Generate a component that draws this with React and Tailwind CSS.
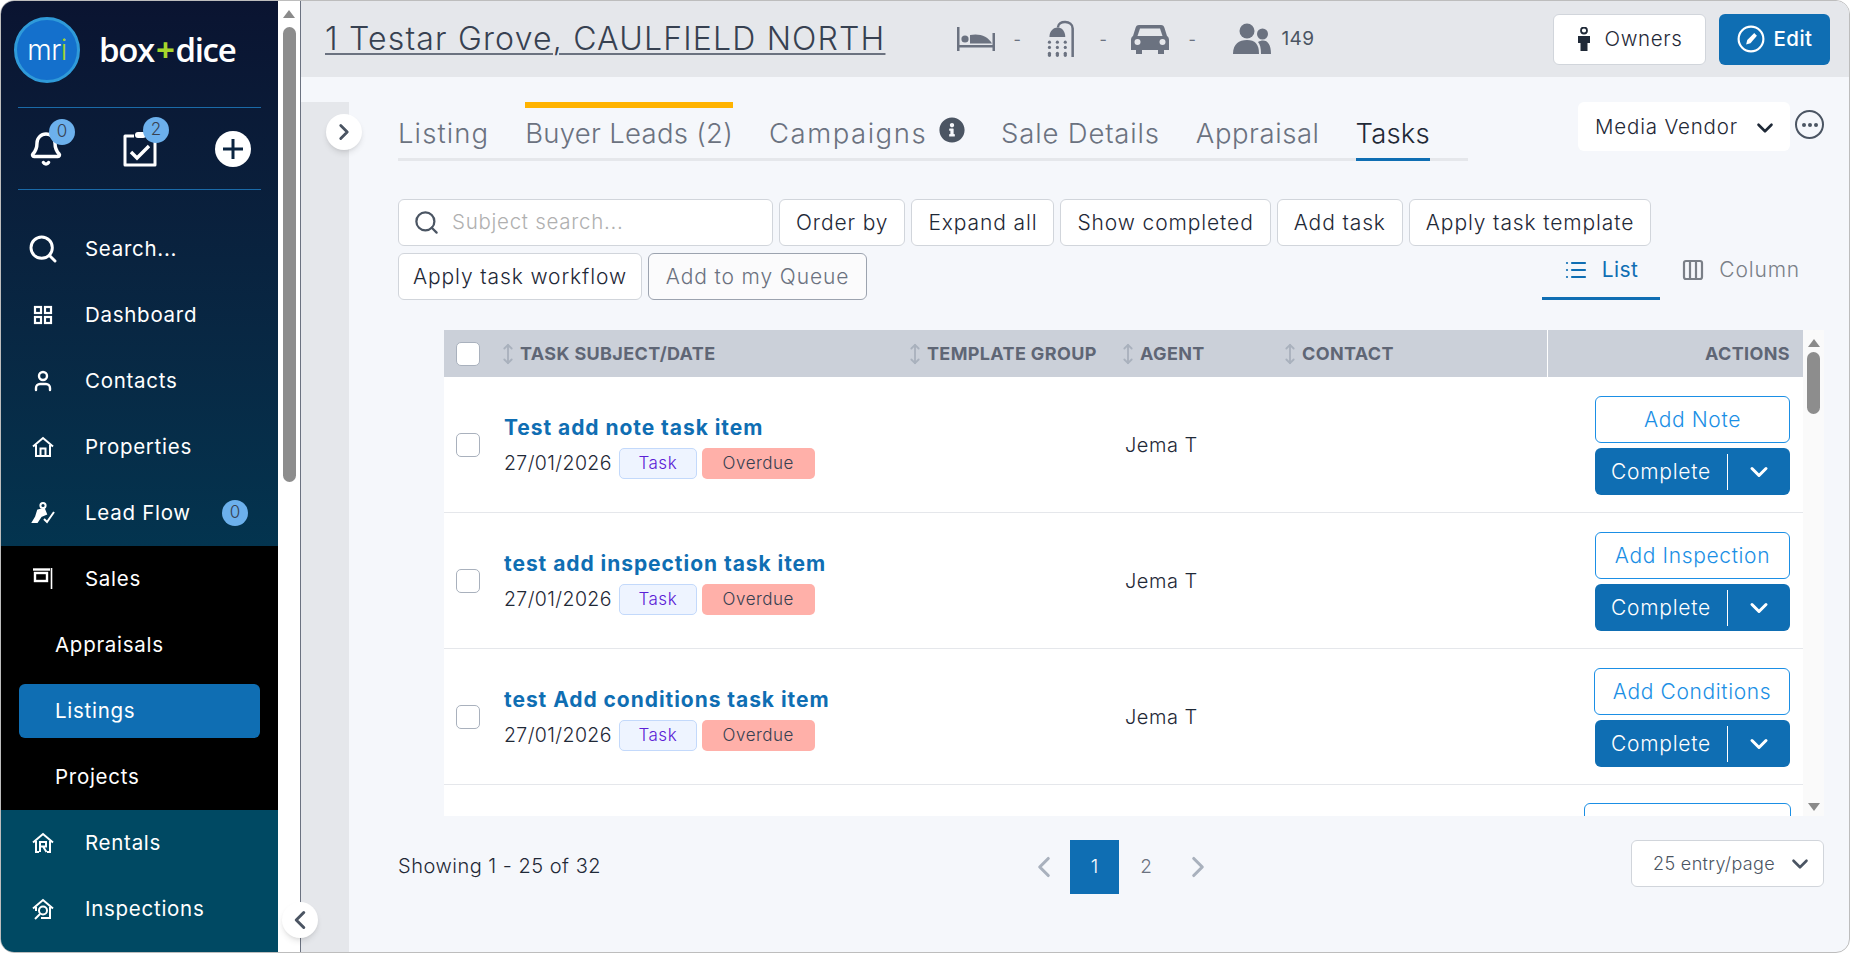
import React from "react";
import { Bell, Search, User, MoveVertical, ChevronDown, ChevronLeft, ChevronRight, Columns3, List } from "lucide-react";
import { FaInfoCircle } from "react-icons/fa";

const Scroll = ({ up }) => (
  <svg width="12" height="8" viewBox="0 0 12 8" className="shrink-0"><path d={up ? "M6 0 L12 8 L0 8Z" : "M0 0 L12 0 L6 8Z"} fill="#8a8a8a" /></svg>
);

const IconGrid = () => (
  <svg width="20" height="20" viewBox="0 0 20 20" fill="none" stroke="white" strokeWidth="2.2"><rect x="2" y="2" width="6" height="6" /><rect x="12" y="2" width="6" height="6" /><rect x="2" y="12" width="6" height="6" /><rect x="12" y="12" width="6" height="6" /></svg>
);
const IconHome = () => (
  <svg width="24" height="24" viewBox="0 0 24 24" fill="none" stroke="white" strokeWidth="2"><path d="M2 11.5 L12 3 L22 11.5" /><path d="M5 10 V21 H19 V10" /><path d="M9.5 21 V13.5 H14.5 V21" /></svg>
);
const IconLead = () => (
  <svg width="24" height="24" viewBox="0 0 24 24" fill="none" stroke="white" strokeWidth="2"><circle cx="12" cy="4.5" r="2.6" /><path d="M7 9.5 L13 8 L15 13 L10 15 L6 21 L2 21 L5 16Z" fill="white" /><path d="M13 18 L16 21 L23 11" strokeWidth="2" /></svg>
);
const IconSales = () => (
  <svg width="22" height="24" viewBox="0 0 22 24" fill="none" stroke="white" strokeWidth="2.4"><path d="M1 2.5 H18" /><path d="M19.5 1 V22" strokeWidth="1.6" /><rect x="3" y="6" width="12" height="8" /></svg>
);
const IconRent = () => (
  <svg width="24" height="24" viewBox="0 0 24 24" fill="none" stroke="white" strokeWidth="2"><path d="M2 11.5 L12 3 L22 11.5" /><path d="M5 10 V21 H8" /><path d="M19 10 V21 H16" /><path d="M9 21 V11 H15 V15.5 H9 M12 15.5 L15.5 21" /></svg>
);
const IconInsp = () => (
  <svg width="24" height="24" viewBox="0 0 24 24" fill="none" stroke="white" strokeWidth="2"><path d="M2 11.5 L12 3 L22 11.5" /><path d="M5 10 V14 M19 10 V21 H10" /><circle cx="12" cy="13.5" r="4" /><path d="M9 17 L4 22" /></svg>
);
const IconClip = () => (
  <svg width="34" height="36" viewBox="0 0 34 36" fill="none" stroke="white" strokeWidth="3" className="shrink-0"><path d="M11 5 H2 V34 H32 V5 H24" strokeLinejoin="round" /><rect x="12" y="1" width="11" height="6" rx="3" fill="white" stroke="none" /><path d="M8 21 L14 27 L26 15" strokeWidth="3.4" /></svg>
);
const IconBed = () => (
  <svg width="38" height="26" viewBox="0 0 38 26" fill="#6b7280"><rect x="0" y="1" width="2.5" height="24" /><rect x="35.5" y="7" width="2.5" height="18" /><rect x="0" y="19" width="38" height="2.5" /><circle cx="8" cy="13" r="3.6" /><path d="M13 17.5 V9 C22 7 31 10 35 17.5Z" /></svg>
);
const IconShower = () => (
  <svg width="32" height="38" viewBox="0 0 30 36" fill="#6b7280"><path d="M13 7 C13 0 27 0 27 8 V35" fill="none" stroke="#6b7280" strokeWidth="2.4" /><path d="M5 16 C5 10 9 7 13 7 C17 7 20 11 20 16Z" /><circle cx="5" cy="21" r="1.5" /><circle cx="12.5" cy="21" r="1.5" /><circle cx="20" cy="21" r="1.5" /><circle cx="5" cy="26" r="1.5" /><circle cx="12.5" cy="26" r="1.5" /><circle cx="20" cy="26" r="1.5" /><rect x="3.5" y="30" width="3" height="5" rx="1.5" /><rect x="11" y="30" width="3" height="5" rx="1.5" /><rect x="18.5" y="30" width="3" height="5" rx="1.5" /></svg>
);
const IconCar = () => (
  <svg width="38" height="32" viewBox="0 0 38 32" fill="#6b7280"><path d="M8 2 H30 C32 2 33 3 33.5 5 L36 13 C37.5 14 38 15.5 38 17 V27 H33 V31 H27 V27 H11 V31 H5 V27 H0 V17 C0 15.5 .5 14 2 13 L4.5 5 C5 3 6 2 8 2Z" /><path d="M9 5.5 H29 L31.5 13 H6.5Z" fill="#e5e7eb" /><circle cx="6.5" cy="19" r="3" fill="#e5e7eb" /><circle cx="31.5" cy="19" r="3" fill="#e5e7eb" /></svg>
);
const IconUsers = () => (
  <svg width="38" height="32" viewBox="0 0 38 32" fill="#6b7280"><circle cx="14" cy="8" r="7.5" /><path d="M0 31 C0 21 6 17 14 17 C22 17 26 21 26 31Z" /><circle cx="29.5" cy="11" r="5.5" /><path d="M28 31 C28 25 27 21 25 19 C27 18 28 17.5 30 17.5 C35 17.5 38 22 38 31Z" /></svg>
);
const IconOwner = () => (
  <svg width="14" height="24" viewBox="0 0 14 24" fill="#1f2937" className="shrink-0"><circle cx="7" cy="3.5" r="3" fill="none" stroke="#1f2937" strokeWidth="1.8" /><path d="M1 9 H13 V16 H10.5 V24 H3.5 V16 H1Z" /></svg>
);
const IconEdit = () => (
  <svg width="28" height="28" viewBox="0 0 26 26" fill="none" stroke="white" strokeWidth="2" className="shrink-0"><circle cx="13" cy="13" r="11.5" /><path d="M8.5 18 L9.5 14 L16 7.5 L18.5 10 L12.5 17Z" fill="white" stroke="none" /></svg>
);

const Badge = ({ children, className }) => (
  <span className={"flex items-center justify-center w-[26px] h-[26px] rounded-full bg-[#6cb0ec] text-[#374151] text-[17px] font-light " + className}>{children}</span>
);

const NavRow = ({ icon, label, children }) => (
  <div className="relative flex items-center h-[66px] text-white">
    <span className="w-[84px] flex justify-center pr-[1px] shrink-0">{icon}</span>
    <span className="text-[20.5px] tracking-[0.035em]">{label}</span>
    {children}
  </div>
);
const SubRow = ({ label, active }) => (
  <div className="flex items-center h-[66px]">
    <div className={"flex items-center w-[241px] h-[54px] ml-[18px] rounded-[6px] pl-[36px] text-white text-[20.5px] tracking-[0.035em] " + (active ? "bg-[#0f6eb3]" : "")}>{label}</div>
  </div>
);

const Btn = ({ children, className = "" }) => (
  <button className={"h-[47px] px-[16px] bg-white border border-[#d1d5db] rounded-[6px] text-[21px] tracking-[0.042em] text-[#1f2937] font-light whitespace-nowrap " + className}>{children}</button>
);

const Tab = ({ children, active, bar, track }) => (
  <div className="relative flex items-center h-full">
    {bar && <span className="absolute left-0 right-0 top-0 h-[6px] bg-[#ffb300]" />}
    <span className={"pt-[7px] text-[27.5px] font-light " + track + " " + (active ? "text-[#1f2937]" : "text-[#6b7280]")}>{children}</span>
    {active && <span className="absolute left-0 right-0 -bottom-[3px] h-[3px] bg-[#0f6eb3]" />}
  </div>
);

const Th = ({ children, className = "" }) => (
  <div className={"flex items-center font-bold text-[18px] text-[#5f6675] tracking-[0.02em] " + className}>
    <MoveVertical size={22} strokeWidth={2} className="text-[#a9b1bd] -ml-[6px] mr-[1px] shrink-0" />
    <span>{children}</span>
  </div>
);

const cols = "grid grid-cols-[56px_410px_208px_167px_262px_255px]";

const Row = ({ title, action, wide }) => (
  <div className={cols + " h-[136px] border-b border-[#e5e7eb] bg-white shrink-0"}>
    <div className="flex items-center pl-[12px]"><span className="w-[24px] h-[24px] rounded-[5px] border border-[#a9b1bd] bg-white" /></div>
    <div className="pl-[4px] pt-[37px] col-span-2">
      <div className="text-[21px] font-bold text-[#0f6eb3] tracking-[0.045em] leading-[28px]">{title}</div>
      <div className="flex items-center mt-[6px]">
        <span className="text-[19.5px] text-[#1f2937] tracking-[0.02em] font-light">27/01/2026</span>
        <span className="flex items-center justify-center w-[78px] h-[31px] ml-[7px] rounded-[5px] bg-[#eef4ff] border border-[#c3d9fb] text-[#5b21d6] text-[17px] font-light tracking-[0.03em]">Task</span>
        <span className="flex items-center justify-center w-[113px] h-[31px] ml-[5px] rounded-[5px] bg-[#ffb0a9] text-[#374151] text-[17px] font-light tracking-[0.03em]">Overdue</span>
      </div>
    </div>
    <div className="flex items-center pl-[7px] text-[20px] text-[#1f2937] tracking-[0.025em] font-light">Jema T</div>
    <div />
    <div className="flex flex-col items-end pr-[12px] pt-[19px] gap-[5px]">
      <button className={"h-[47px] border border-[#1b8fe5] rounded-[6px] bg-white text-[#1b8fe5] text-[21px] tracking-[0.03em] font-light whitespace-nowrap " + wide}>{action}</button>
      <div className="flex items-center w-[195px] h-[47px] rounded-[6px] bg-[#0f6eb3] text-white">
        <span className="w-[133px] text-center text-[21px] font-light tracking-[0.035em] border-r border-white leading-[36px]">Complete</span>
        <span className="flex-1 flex justify-center"><ChevronDown size={28} strokeWidth={2.6} /></span>
      </div>
    </div>
  </div>
);

export default function App() {
  return (
    <div className="flex h-screen overflow-hidden rounded-[14px] border border-[#bdbdbd] bg-[#f5f7fb] font-['Inter',sans-serif]">
      {/* Sidebar */}
      <aside className="flex flex-col w-[277px] shrink-0 overflow-hidden">
        <div className="bg-linear-to-b from-[#0a1431] to-[#03344f] h-[545px] shrink-0">
          <div className="flex items-center h-[106px] pl-[13px] pb-[8px]">
            <span className="flex items-center justify-center w-[66px] h-[66px] rounded-full bg-[#1470cc] border-[3px] border-[#2f9ad9] text-white text-[28px] tracking-[-0.02em] font-light">m<span>r</span><span className="text-[#a6d62c]">i</span></span>
            <span className="ml-[19px] text-white text-[33px] font-semibold font-['Open_Sans',sans-serif] tracking-[-0.04em]">box<span className="text-[#a6d62c] font-bold mx-[2px]">+</span>dice</span>
          </div>
          <div className="mx-[17px] border-t border-[#1a6aa8]" />
          <div className="flex items-center h-[81px]">
            <span className="relative ml-[28px] w-[34px] flex justify-center">
              <Bell size={36} strokeWidth={2.3} className="text-white shrink-0" />
              <Badge className="absolute -top-[12px] left-[20px]">0</Badge>
            </span>
            <span className="relative ml-[60px] w-[34px] flex justify-center">
              <IconClip />
              <Badge className="absolute -top-[14px] left-[20px]">2</Badge>
            </span>
            <span className="ml-[58px] flex items-center justify-center w-[36px] h-[36px] rounded-full bg-white">
              <svg width="22" height="22" viewBox="0 0 22 22" stroke="#0a2440" strokeWidth="3"><path d="M11 1 V21 M1 11 H21" /></svg>
            </span>
          </div>
          <div className="mx-[17px] border-t border-[#1a6aa8]" />
          <div className="h-[26px]" />
          <NavRow icon={<Search size={32} strokeWidth={2.2} className="shrink-0" />} label="Search..." />
          <NavRow icon={<IconGrid />} label="Dashboard" />
          <NavRow icon={<User size={24} strokeWidth={2.4} />} label="Contacts" />
          <NavRow icon={<IconHome />} label="Properties" />
          <NavRow icon={<IconLead />} label="Lead Flow"><Badge className="absolute left-[221px] top-[20px]">0</Badge></NavRow>
        </div>
        <div className="bg-black shrink-0">
          <NavRow icon={<IconSales />} label="Sales" />
          <SubRow label="Appraisals" />
          <SubRow label="Listings" active />
          <SubRow label="Projects" />
        </div>
        <div className="bg-[#004963] flex-1">
          <NavRow icon={<IconRent />} label="Rentals" />
          <NavRow icon={<IconInsp />} label="Inspections" />
        </div>
      </aside>
      {/* sidebar scrollbar */}
      <div className="flex flex-col items-center w-[22px] shrink-0 bg-white pt-[9px]">
        <Scroll up />
        <div className="w-[13px] h-[455px] mt-[9px] rounded-[7px] bg-[#8d8d8d]" />
      </div>
      <div className="w-px bg-[#6b7280] shrink-0" />

      {/* Main */}
      <main className="relative flex-1 flex flex-col min-w-0">
        <span className="absolute -left-[19px] top-[901px] flex items-center justify-center w-[36px] h-[36px] rounded-full bg-white shadow-md z-10"><ChevronLeft size={30} strokeWidth={2.4} className="text-[#4b5563]" /></span>
        <header className="flex items-center h-[76px] shrink-0 bg-[#e5e7eb] pl-[24px]">
          <h1 className="text-[32px] font-light text-[#374151] underline decoration-[#6b7280] decoration-2 underline-offset-[3px] tracking-[0.037em] whitespace-nowrap">1 Testar Grove, CAULFIELD NORTH</h1>
          <div className="ml-[72px] flex items-center text-[#6b7280]">
            <IconBed /><span className="ml-[18px] w-[6px]">-</span>
            <span className="ml-[25px]"><IconShower /></span><span className="ml-[23px] w-[6px]">-</span>
            <span className="ml-[26px]"><IconCar /></span><span className="ml-[19px] w-[6px]">-</span>
            <span className="ml-[39px]"><IconUsers /></span>
            <span className="ml-[10px] text-[19px] tracking-[0.02em] text-[#4b5563]">149</span>
          </div>
          <div className="ml-auto mr-[19px] flex items-center gap-[13px]">
            <button className="flex items-center justify-center gap-[14px] w-[153px] h-[51px] bg-white border border-[#d1d5db] rounded-[6px] text-[20.5px] font-light tracking-[0.03em] text-[#1f2937]"><IconOwner />Owners</button>
            <button className="flex items-center justify-center gap-[9px] w-[111px] h-[51px] bg-[#0f6eb3] rounded-[6px] text-[20.5px] font-medium tracking-[0.02em] text-white"><IconEdit />Edit</button>
          </div>
        </header>
        <div className="flex-1 flex min-h-0">
          <div className="relative w-[48px] mt-[25px] bg-[#e5e7eb] shrink-0">
            <span className="absolute left-[25px] top-[12px] flex items-center justify-center w-[36px] h-[36px] rounded-full bg-white shadow-md"><ChevronRight size={26} strokeWidth={2.6} className="text-[#4b5563]" /></span>
          </div>
          <div className="flex-1 min-w-0 pl-[49px] pr-[25px]">
            {/* Tabs */}
            <div className="relative flex items-start h-[59px] mt-[25px]">
              <div className="flex gap-[36px] items-center h-[59px] w-[1070px] border-b-[3px] border-[#e5e7eb] shrink-0">
                <Tab track="tracking-[0.04em]">Listing</Tab>
                <Tab bar track="tracking-[0.01em]">Buyer Leads (2)</Tab>
                <span className="flex items-center gap-[12px] h-full"><Tab track="tracking-[0.055em]">Campaigns</Tab><FaInfoCircle size={26} className="text-[#4b5563]" /></span>
                <Tab track="tracking-[0.03em]">Sale Details</Tab>
                <Tab track="tracking-[0.02em]">Appraisal</Tab>
                <Tab active track="tracking-[0.005em]">Tasks</Tab>
              </div>
              <div className="flex items-center justify-between w-[212px] h-[49px] ml-[110px] pl-[17px] pr-[12px] pt-[2px] bg-white rounded-[6px] text-[20.5px] font-light tracking-[0.04em] text-[#1f2937] whitespace-nowrap shrink-0">Media Vendor<ChevronDown size={26} strokeWidth={2.4} className="shrink-0" /></div>
              <span className="flex items-center justify-center gap-[2px] w-[29px] h-[29px] ml-[5px] mt-[8px] rounded-full border-2 border-[#4b5563] shrink-0">
                <span className="w-[4px] h-[4px] rounded-full bg-[#4b5563]" /><span className="w-[4px] h-[4px] rounded-full bg-[#4b5563]" /><span className="w-[4px] h-[4px] rounded-full bg-[#4b5563]" />
              </span>
            </div>
            {/* Toolbar */}
            <div className="flex mt-[38px]">
              <div className="flex flex-wrap gap-x-[6px] gap-y-[7px] w-[1262px]">
                <div className="flex items-center w-[375px] h-[47px] px-[14px] gap-[12px] bg-white border border-[#d1d5db] rounded-[6px]">
                  <Search size={27} strokeWidth={2} className="text-[#4b5563] shrink-0" />
                  <span className="text-[20.5px] font-light tracking-[0.035em] text-[#b0b0b0]">Subject search...</span>
                </div>
                <Btn>Order by</Btn>
                <Btn>Expand all</Btn>
                <Btn>Show completed</Btn>
                <Btn>Add task</Btn>
                <Btn>Apply task template</Btn>
                <Btn className="w-[244px] !px-0">Apply task workflow</Btn>
                <Btn className="w-[219px] !px-0 !border-[#9ca3af] !bg-[#fbfbfc] !text-[#6b7280]">Add to my Queue</Btn>
              </div>
            </div>
            <div className="flex justify-end -mt-[56px] h-[56px] pr-[24px]">
              <div className="flex items-center justify-center gap-[14px] w-[118px] h-[56px] border-b-[3px] border-[#0f6eb3] text-[#0f6eb3] text-[21px] tracking-[0.02em] pb-[2px]"><List size={24} strokeWidth={2.2} className="shrink-0" />List</div>
              <div className="flex items-center justify-end gap-[14px] w-[140px] h-[56px] pb-[5px] text-[#7a7f87] text-[21px] font-light tracking-[0.04em]"><Columns3 size={24} strokeWidth={2.2} className="shrink-0" />Column</div>
            </div>
            {/* Table */}
            <div className="flex h-[486px] mt-[30px] ml-[46px] overflow-hidden">
              <div className="flex-1 flex flex-col min-w-0 overflow-hidden">
                <div className={cols + " h-[47px] bg-[#cbd0d9] shrink-0"}>
                  <div className="flex items-center pl-[12px]"><span className="w-[24px] h-[24px] rounded-[5px] border border-[#a9b1bd] bg-white" /></div>
                  <Th className="pl-[3px]">TASK SUBJECT/DATE</Th>
                  <Th>TEMPLATE GROUP</Th>
                  <Th className="pl-[5px]">AGENT</Th>
                  <Th>CONTACT</Th>
                  <div className="flex items-center justify-end pr-[12px] border-l border-white font-bold text-[18px] text-[#5f6675] tracking-[0.02em]">ACTIONS</div>
                </div>
                <Row title="Test add note task item" action="Add Note" wide="w-[195px]" />
                <Row title="test add inspection task item" action="Add Inspection" wide="w-[195px]" />
                <Row title="test Add conditions task item" action="Add Conditions" wide="w-[196px]" />
                <div className="flex-1 flex justify-end pr-[12px] pt-[18px] bg-white">
                  <span className="w-[207px] h-[47px] shrink-0 border border-[#1b8fe5] rounded-[6px] bg-white" />
                </div>
              </div>
              <div className="flex flex-col items-center w-[21px] shrink-0 bg-[#fafafa] pt-[9px]">
                <Scroll up />
                <div className="w-[13px] h-[62px] mt-[5px] rounded-[7px] bg-[#8d8d8d]" />
                <div className="mt-auto mb-[5px]"><Scroll /></div>
              </div>
            </div>
            {/* Footer */}
            <div className="relative flex items-center mt-[24px] h-[54px]">
              <span className="text-[20px] font-light text-[#1f2937] tracking-[0.025em] -mt-[2px]">Showing 1 - 25 of 32</span>
              <div className="absolute left-[629px] top-0 flex items-center h-[54px] text-[#6b7280]">
                <ChevronLeft size={34} strokeWidth={2.2} className="text-[#a9b1bd]" />
                <span className="flex items-center justify-center ml-[9px] w-[49px] h-[54px] bg-[#0f6eb3] text-white text-[19px] font-light">1</span>
                <span className="flex items-center justify-center w-[54px] text-[19px] font-light">2</span>
                <span className="ml-[8px]"><ChevronRight size={34} strokeWidth={2.2} className="text-[#a9b1bd]" /></span>
              </div>
              <div className="ml-auto flex items-center justify-between w-[193px] h-[47px] -mt-[7px] pl-[21px] pr-[10px] bg-white border border-[#d1d5db] rounded-[6px] text-[#4b5563] text-[18px] font-light tracking-[0.02em] whitespace-nowrap">25 entry/page<ChevronDown size={26} strokeWidth={2.4} className="shrink-0" /></div>
            </div>
          </div>
        </div>
      </main>
    </div>
  );
}
